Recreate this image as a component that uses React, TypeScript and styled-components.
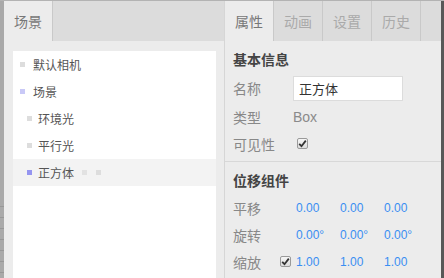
import styled, { createGlobalStyle } from "styled-components";

const GlobalStyle = createGlobalStyle`
  html, body {
    margin: 0;
    padding: 0;
    background: #ececec;
  }
  body {
    font-family: "Liberation Sans", "Noto Sans CJK SC", sans-serif;
  }
`;

const treeItems = [
  { name: "默认相机", color: "#dddddd", indent: false },
  { name: "场景", color: "#c9c9f7", indent: false },
  { name: "环境光", color: "#dddddd", indent: true },
  { name: "平行光", color: "#dddddd", indent: true },
  { name: "正方体", color: "#9595f0", indent: true, selected: true, extra: true },
];

const tabs = ["属性", "动画", "设置", "历史"];

const transforms = [
  { label: "平移", values: ["0.00", "0.00", "0.00"], check: false },
  { label: "旋转", values: ["0.00°", "0.00°", "0.00°"], check: false },
  { label: "缩放", values: ["1.00", "1.00", "1.00"], check: true },
];

const Check = () => (
  <CheckBox>
    <svg width="9" height="9" viewBox="0 0 9 9">
      <path d="M1.2 4.8 L3.5 7.2 L7.8 1.6" fill="none" stroke="#333" strokeWidth="1.8" />
    </svg>
  </CheckBox>
);

export default function App() {
  return (
    <>
      <GlobalStyle />
      <Frame>
        <Ruler />
        <LeftPanel>
          <TabBar>
            <Tab $active>场景</Tab>
          </TabBar>
          <LeftBody>
            <Tree>
              {treeItems.map((item) => (
                <TreeRow key={item.name} $selected={item.selected} $indent={item.indent}>
                  <Dot $color={item.color} />
                  <TreeLabel $gap={item.indent ? 6 : 8}>{item.name}</TreeLabel>
                  {item.extra && (
                    <>
                      <Dot $color="#e2e2e2" $gap={8} />
                      <Dot $color="#dddddd" $gap={9} />
                    </>
                  )}
                </TreeRow>
              ))}
            </Tree>
          </LeftBody>
        </LeftPanel>
        <RightPanel>
          <TabBar>
            {tabs.map((t, i) => (
              <Tab key={t} $active={i === 0}>
                {t}
              </Tab>
            ))}
          </TabBar>
          <Section>
            <SectionTitle>基本信息</SectionTitle>
            <FieldRow $h={30}>
              <Label>名称</Label>
              <NameInput>正方体</NameInput>
            </FieldRow>
            <FieldRow $h={27}>
              <Label>类型</Label>
              <TypeValue>Box</TypeValue>
            </FieldRow>
            <FieldRow $h={27}>
              <Label>可见性</Label>
              <CheckSlot $left={4}>
                <Check />
              </CheckSlot>
            </FieldRow>
          </Section>
          <Section $border>
            <SectionTitle>位移组件</SectionTitle>
            {transforms.map((row) => (
              <VectorRow key={row.label}>
                <Label $w={47}>{row.label}</Label>
                <CheckSlot $w={16}>{row.check && <Check />}</CheckSlot>
                {row.values.map((v, i) => (
                  <Num key={i}>{v}</Num>
                ))}
              </VectorRow>
            ))}
          </Section>
        </RightPanel>
        <EdgeBar />
      </Frame>
    </>
  );
}

const Frame = styled.div`
  display: flex;
  width: 444px;
  height: 278px;
  border-top: 1px solid #b3b3b3;
  box-sizing: border-box;
  overflow: hidden;
`;

/* ticks only on the lower part of the strip, as in the editor's ruler */
const Ruler = styled.div`
  width: 4px;
  flex-shrink: 0;
  background-color: #a9a9a9;
  background-image: repeating-linear-gradient(
    to bottom,
    transparent 0,
    transparent 10px,
    #979797 10px,
    #979797 11px
  );
  background-size: 100% 90px;
  background-position: 0 195px;
  background-repeat: no-repeat;
`;

const EdgeBar = styled.div`
  width: 3px;
  flex-shrink: 0;
  background: #585858;
`;

const LeftPanel = styled.div`
  width: 220px;
  flex-shrink: 0;
  display: flex;
  flex-direction: column;
  background: #ececec;
`;

const RightPanel = styled.div`
  width: 217px;
  flex-shrink: 0;
  display: flex;
  flex-direction: column;
  background: #ececec;
  border-left: 1px solid #d6d6d6;
  box-sizing: border-box;
`;

const TabBar = styled.div`
  display: flex;
  height: 40px;
  flex-shrink: 0;
  background: #dcdcdc;
`;

const Tab = styled.div<{ $active?: boolean }>`
  width: 48px;
  display: flex;
  align-items: center;
  justify-content: center;
  font-size: 14px;
  color: ${(p) => (p.$active ? "#777777" : "#aaaaaa")};
  background: ${(p) => (p.$active ? "#ececec" : "#dcdcdc")};
  border-right: 1px solid #c9c9c9;
`;

const LeftBody = styled.div`
  flex: 1;
  padding: 10px 8px 0 9px;
  display: flex;
`;

const Tree = styled.div`
  flex: 1;
  background: #ffffff;
`;

const TreeRow = styled.div<{ $selected?: boolean; $indent?: boolean }>`
  height: 27px;
  display: flex;
  align-items: center;
  padding-left: ${(p) => (p.$indent ? "14px" : "7px")};
  background: ${(p) => (p.$selected ? "#f3f3f3" : "transparent")};
`;

const Dot = styled.span<{ $color: string; $gap?: number }>`
  width: 5px;
  height: 5px;
  background: ${(p) => p.$color};
  margin-left: ${(p) => (p.$gap ? `${p.$gap}px` : "0")};
  flex-shrink: 0;
`;

const TreeLabel = styled.span<{ $gap: number }>`
  margin-left: ${(p) => p.$gap}px;
  font-size: 12px;
  color: #555555;
`;

const Section = styled.div<{ $border?: boolean }>`
  padding: ${(p) => (p.$border ? "4px 0 0 8px" : "4px 0 4px 8px")};
  border-top: ${(p) => (p.$border ? "1px solid #d8d8d8" : "none")};
`;

const SectionTitle = styled.div`
  height: 28px;
  display: flex;
  align-items: center;
  font-size: 14px;
  font-weight: bold;
  color: #444444;
`;

const FieldRow = styled.div<{ $h: number }>`
  height: ${(p) => p.$h}px;
  display: flex;
  align-items: center;
`;

const Label = styled.span<{ $w?: number }>`
  width: ${(p) => p.$w ?? 60}px;
  flex-shrink: 0;
  font-size: 14px;
  color: #888888;
`;

const NameInput = styled.div`
  width: 110px;
  height: 25px;
  box-sizing: border-box;
  background: #ffffff;
  border: 1px solid #dcdcdc;
  display: flex;
  align-items: center;
  padding-left: 5px;
  font-size: 13px;
  color: #333333;
`;

const TypeValue = styled.span`
  font-size: 14px;
  color: #8a8a8a;
`;

const CheckSlot = styled.span<{ $w?: number; $left?: number }>`
  width: ${(p) => (p.$w ? `${p.$w}px` : "auto")};
  margin-left: ${(p) => p.$left ?? 0}px;
  display: flex;
  align-items: center;
  flex-shrink: 0;
`;

const CheckBox = styled.span`
  width: 11px;
  height: 11px;
  box-sizing: border-box;
  border: 1px solid #9a9a9a;
  border-radius: 2px;
  background: linear-gradient(#f6f6f6, #dcdcdc);
  display: flex;
  align-items: center;
  justify-content: center;
`;

const VectorRow = styled.div`
  height: 27px;
  display: flex;
  align-items: center;
`;

const Num = styled.span`
  width: 44px;
  flex-shrink: 0;
  font-size: 12px;
  color: #3a8ef2;
`;
